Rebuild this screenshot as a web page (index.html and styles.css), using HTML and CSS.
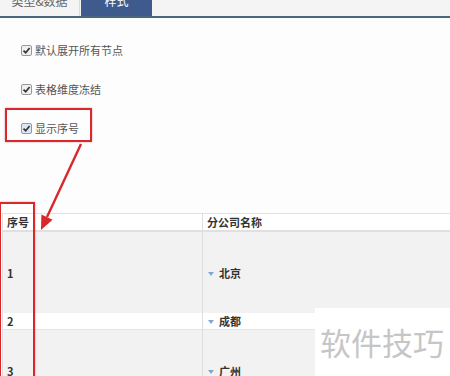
FILE: index.html
```html
<!DOCTYPE html>
<html lang="zh">
<head>
  <meta charset="UTF-8">
  <title>样式</title>
  <link rel="stylesheet" href="styles.css">
</head>
<body>
  <div class="tabs">
    <div class="tab">类型&amp;数据</div>
    <div class="tab activo">样式</div>
  </div>

  <div class="opciones">
    <label class="opcion">
      <span class="check"><svg viewBox="0 0 9 9" width="9" height="9"><path d="M1.5 4.6 L3.7 6.8 L7.6 2" fill="none" stroke="#333" stroke-width="1.7"/></svg></span>
      默认展开所有节点
    </label>
    <label class="opcion">
      <span class="check"><svg viewBox="0 0 9 9" width="9" height="9"><path d="M1.5 4.6 L3.7 6.8 L7.6 2" fill="none" stroke="#333" stroke-width="1.7"/></svg></span>
      表格维度冻结
    </label>
    <label class="opcion">
      <span class="check foco"><svg viewBox="0 0 9 9" width="9" height="9"><path d="M1.5 4.6 L3.7 6.8 L7.6 2" fill="none" stroke="#333" stroke-width="1.7"/></svg></span>
      显示序号
    </label>
  </div>

  <table class="tabla">
    <tr class="cabecera">
      <th class="col-num">序号</th>
      <th>分公司名称</th>
    </tr>
    <tr class="alta">
      <td class="col-num">1</td>
      <td><span class="tri"></span>北京</td>
    </tr>
    <tr class="baja">
      <td class="col-num">2</td>
      <td><span class="tri"></span>成都</td>
    </tr>
    <tr class="alta">
      <td class="col-num">3</td>
      <td><span class="tri"></span>广州</td>
    </tr>
  </table>

  <!-- anotaciones -->
  <div class="marca marca-check"></div>
  <div class="marca marca-col"></div>
  <svg class="flecha" width="450" height="376" viewBox="0 0 450 376">
    <line x1="81" y1="144" x2="47" y2="217" stroke="#d8282c" stroke-width="2.4"/>
    <polygon points="41,230 52.6,219.8 41.4,214.6" fill="#d8282c"/>
  </svg>

  <div class="sello">软件技巧</div>
</body>
</html>
```

FILE: styles.css
```css
body {
  margin: 0;
  background: #fdfdfd;
  font-family: "Noto Sans CJK SC", "Noto Sans", sans-serif;
  font-size: 11px;
  color: #555;
  overflow: hidden;
  height: 376px;
  position: relative;
}

.tabs {
  display: flex;
  height: 30px;
  margin-top: -14px;
  background: #f4f4f4;
  border-bottom: 2px solid #46687a;
}

.tab {
  width: 79px;
  line-height: 30px;
  text-align: center;
  font-size: 12px;
  color: #666;
  border-right: 1px solid #dcdcdc;
}

.tab.activo {
  width: 71px;
  margin-left: 1px;
  background: #3f5a8c;
  color: #fff;
  border-right: none;
}

.opciones {
  padding: 24px 0 0 21px;
}

.opcion {
  display: flex;
  align-items: center;
  gap: 3px;
  height: 16px;
  margin-bottom: 23px;
  line-height: 16px;
}

.check {
  display: inline-flex;
  align-items: center;
  justify-content: center;
  width: 9px;
  height: 9px;
  border: 1px solid #999;
  border-radius: 2px;
  background: #f0f0f0;
}

.check.foco {
  border-color: #7f9cc4;
  background: #dde6f3;
}

.tabla {
  margin: 77px 0 0 2px;
  width: 448px;
  border-collapse: collapse;
  color: #333;
  font-weight: bold;
}

.tabla th,
.tabla td {
  padding: 0 0 0 4px;
  text-align: left;
  border-left: 1px solid #dedede;
  font-size: 11px;
}

.tabla .col-num {
  width: 195px;
}

.cabecera {
  height: 17px;
  background: #fff;
  border-top: 1px solid #e2e2e2;
  border-bottom: 2px solid #e0e0e0;
}

.alta {
  height: 82px;
  background: #f2f2f2;
}

.baja {
  height: 16px;
  background: #fff;
  border-bottom: 1px solid #e4e4e4;
}

.tri {
  display: inline-block;
  width: 0;
  height: 0;
  border-left: 3px solid transparent;
  border-right: 3px solid transparent;
  border-top: 4px solid #7ea8d2;
  margin: 0 5px 2px 1px;
  vertical-align: middle;
}

.marca {
  position: absolute;
  border: 2.5px solid #d8282c;
  box-shadow: 0 0 2px rgba(120, 0, 0, 0.35);
}

.marca-check {
  left: 5px;
  top: 108px;
  width: 83px;
  height: 30px;
}

.marca-col {
  left: -1px;
  top: 202px;
  width: 32px;
  height: 200px;
}

.flecha {
  position: absolute;
  left: 0;
  top: 0;
  pointer-events: none;
}

.sello {
  position: absolute;
  left: 315px;
  top: 308px;
  width: 135px;
  height: 68px;
  background: #fff;
  color: #c6c6c6;
  font-size: 31px;
  line-height: 68px;
  padding-left: 5px;
  box-sizing: border-box;
  letter-spacing: 0;
}
```
